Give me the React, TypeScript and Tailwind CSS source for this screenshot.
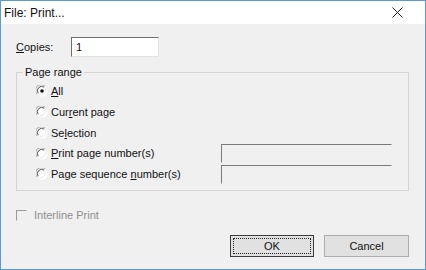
import React from 'react';

function Radio({ checked }: { checked?: boolean }) {
  return (
    <svg width="12" height="12" viewBox="0 0 12 12" className="shrink-0">
      <circle cx="6" cy="6" r="5.5" fill="#ffffff" />
      <path d="M1.2 9 A5.3 5.3 0 0 1 9 1.2" fill="none" stroke="#a0a0a0" strokeWidth="1" />
      <path d="M2.2 8.2 A4.3 4.3 0 0 1 8.2 2.2" fill="none" stroke="#505050" strokeWidth="1" />
      <path d="M9.6 3 A5.3 5.3 0 0 1 3 9.6" fill="none" stroke="#e8e8e8" strokeWidth="1" />
      {checked && <circle cx="6" cy="6" r="1.8" fill="#111111" />}
    </svg>
  );
}

function Row({ label, checked, children }: { label: React.ReactNode; checked?: boolean; children?: React.ReactNode }) {
  return (
    <div className="flex items-center h-[20.75px]">
      <div className="flex items-center gap-[3px] flex-1">
        <Radio checked={checked} />
        <span>{label}</span>
      </div>
      {children}
    </div>
  );
}

function SunkenBox({ className = '' }: { className?: string }) {
  return (
    <div className={`border border-t-[#7a7a7a] border-l-[#7a7a7a] border-b-[#f0f0f0] border-r-[#f0f0f0] ${className}`} />
  );
}

export default function App() {
  return (
    <div
      className="w-[426px] h-[270px] flex flex-col border border-[#5b9bd5] bg-[#f0f0f0] text-[11px] text-[#111] overflow-hidden"
      style={{ fontFamily: '"Liberation Sans", Arial, sans-serif' }}
    >
      {/* Title bar */}
      <div className="h-[23px] bg-white flex items-center pl-[3px] pr-[22px] shrink-0 text-[12px]">
        <span className="flex-1">File: Print...</span>
        <svg width="11" height="11" viewBox="0 0 11 11">
          <path d="M0.5 0.5 L10.5 10.5 M10.5 0.5 L0.5 10.5" stroke="#222" strokeWidth="1" />
        </svg>
      </div>

      {/* Body */}
      <div className="flex-1 flex flex-col pl-[15px] pr-[16px]">
        <div className="flex items-center mt-[13px] h-[20px]">
          <span className="w-[55px]"><u>C</u>opies:</span>
          <div className="w-[88px] h-[20px] bg-white border border-t-[#6e6e6e] border-l-[#6e6e6e] border-b-[#e3e3e3] border-r-[#e3e3e3] flex items-center pl-[4px]">
            1
          </div>
        </div>

        <fieldset className="mt-[8px] w-[393px] h-[126px] border border-[#d4d4d4]">
          <legend className="ml-[6px] px-[2px] leading-[14px]">Page range</legend>
          <div className="pl-[19px] pr-[16px] pt-[2px]">
            <Row label={<><u>A</u>ll</>} checked />
            <Row label={<>Cur<u>r</u>ent page</>} />
            <Row label={<>Se<u>l</u>ection</>} />
            <Row label={<><u>P</u>rint page number(s)</>}>
              <SunkenBox className="w-[171px] h-[19px]" />
            </Row>
            <Row label={<>Page sequence <u>n</u>umber(s)</>}>
              <SunkenBox className="w-[171px] h-[19px]" />
            </Row>
          </div>
        </fieldset>

        <div className="flex items-center gap-[7px] mt-[16px] text-[#8f8f8f]">
          <div className="w-[11px] h-[11px] border border-t-[#9a9a9a] border-l-[#9a9a9a] border-b-[#f0f0f0] border-r-[#f0f0f0]" />
          <span>Interline Print</span>
        </div>

        <div className="flex justify-end gap-[10px] mt-auto mb-[12px]">
          <div className="w-[84px] h-[22px] border border-[#3c3c3c] bg-[#e1e1e1] p-[2px]">
            <div className="w-full h-full border border-dotted border-[#222] flex items-center justify-center">OK</div>
          </div>
          <div className="w-[85px] h-[22px] border border-[#adadad] bg-[#e1e1e1] flex items-center justify-center">
            Cancel
          </div>
        </div>
      </div>
    </div>
  );
}
